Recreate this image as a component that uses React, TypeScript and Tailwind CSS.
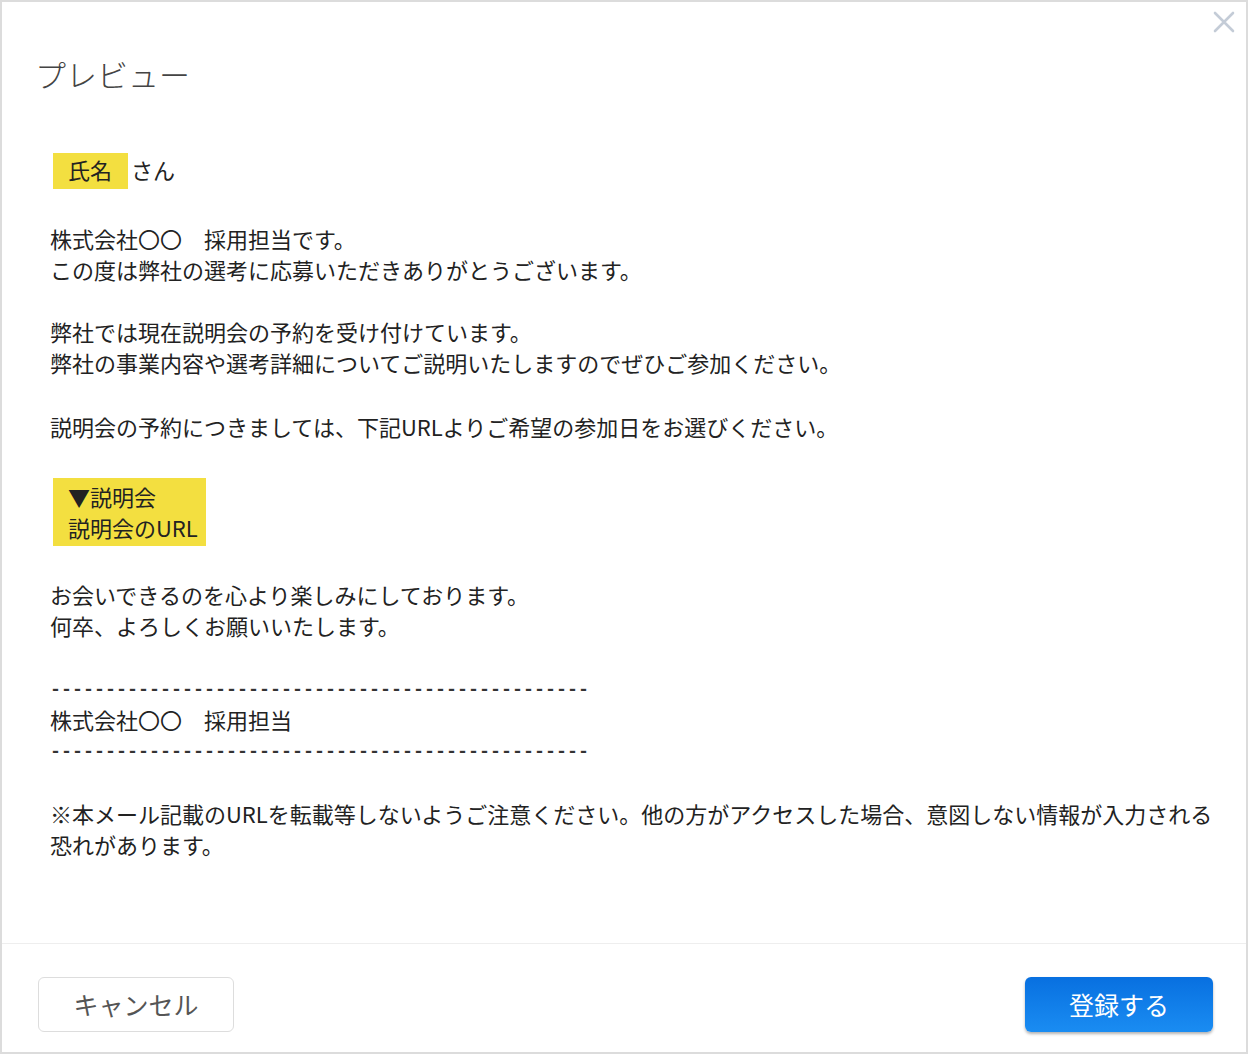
const bodyFont = { fontFamily: '"Noto Sans CJK JP", "Noto Sans", sans-serif' };

const DASHES = "-".repeat(49);

function Highlight({ children, className = "" }: { children: React.ReactNode; className?: string }) {
  return (
    <div className={`ml-[3px] inline-block bg-[#f3df40] pl-[15px] ${className}`}>
      {children}
    </div>
  );
}

function DashLine() {
  return (
    <div className="flex h-[31px] items-center pt-[6px]">
      <span className="font-['Liberation_Mono',monospace] text-[18.33px] font-bold leading-none text-[#333]">
        {DASHES}
      </span>
    </div>
  );
}

export default function App() {
  return (
    <div
      className="relative flex h-[1054px] w-[1248px] flex-col border-2 border-[#dcdcdc] bg-white text-[#222]"
      style={bodyFont}
    >
      <button className="absolute right-[10px] top-[8px] h-[24px] w-[24px] text-[#c4ccd7]" aria-label="閉じる">
        <svg viewBox="0 0 24 24" width="24" height="24" fill="none" stroke="currentColor" strokeWidth="2.6" strokeLinecap="round">
          <path d="M3 3 L21 21 M21 3 L3 21" />
        </svg>
      </button>

      <div className="pl-[33px] pt-[52px]">
        <h1 className="text-[31px] font-light leading-[40px] text-[#444]">プレビュー</h1>
      </div>

      <div className="flex-1 pl-[48px] pr-[26px] text-[22px] leading-[31px]">
        <div className="mt-[59px] flex items-center">
          <Highlight className="pb-[4px] pt-[1px] pr-[16px]">氏名</Highlight>
          <span className="ml-[3px] pb-[3px]">さん</span>
        </div>

        <p className="mt-[34px]">
          株式会社〇〇　採用担当です。
          <br />
          この度は弊社の選考に応募いただきありがとうございます。
        </p>

        <p className="mt-[31px]">
          弊社では現在説明会の予約を受け付けています。
          <br />
          弊社の事業内容や選考詳細についてご説明いたしますのでぜひご参加ください。
        </p>

        <p className="mt-[33px]">説明会の予約につきましては、下記URLよりご希望の参加日をお選びください。</p>

        <div className="mt-[36px]">
          <Highlight className="py-[3px] pr-[8px]">
            ▼説明会
            <br />
            説明会のURL
          </Highlight>
        </div>

        <p className="mt-[33px]">
          お会いできるのを心より楽しみにしております。
          <br />
          何卒、よろしくお願いいたします。
        </p>

        <div className="mt-[32px]">
          <DashLine />
          <div>株式会社〇〇　採用担当</div>
          <DashLine />
        </div>

        <p className="mt-[32px]">
          ※本メール記載のURLを転載等しないようご注意ください。他の方がアクセスした場合、意図しない情報が入力される恐れがあります。
        </p>
      </div>

      <div className="flex items-center justify-between border-t border-[#eeeeee] pb-[20px] pl-[36px] pr-[33px] pt-[33px]">
        <button className="h-[55px] w-[196px] rounded-[6px] border border-[#dddddd] bg-white text-[25px] text-[#555]">
          キャンセル
        </button>
        <button className="h-[55px] w-[188px] rounded-[6px] bg-gradient-to-b from-[#0870e0] to-[#1a8cf2] text-[25px] text-white shadow-[0_2px_3px_rgba(0,0,0,0.3)]">
          登録する
        </button>
      </div>
    </div>
  );
}
